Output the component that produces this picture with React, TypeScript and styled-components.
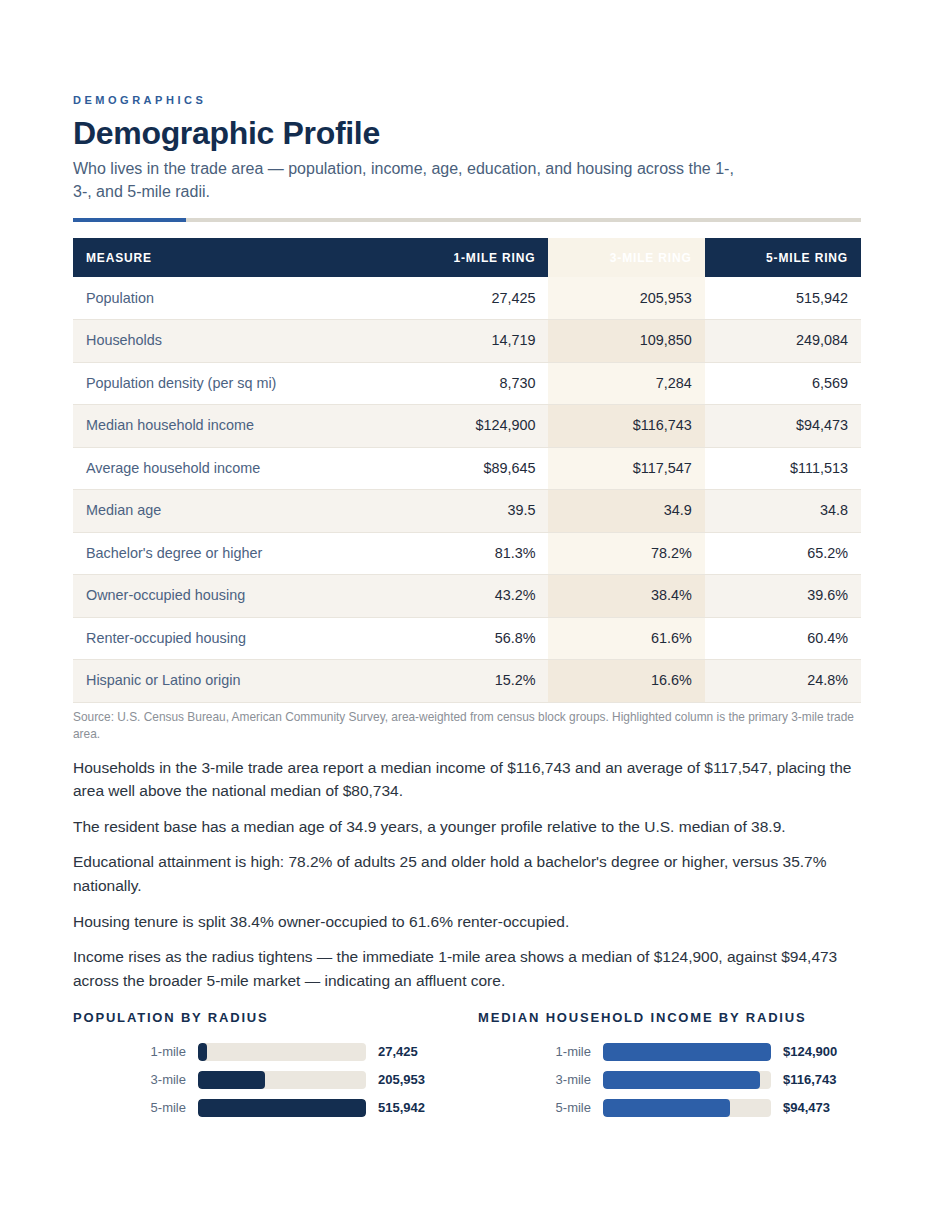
import React from "react";
import styled, { createGlobalStyle } from "styled-components";

const GlobalStyle = createGlobalStyle`
  html, body { margin: 0; padding: 0; background: #ffffff; }
  body { font-family: "Liberation Sans", Arial, sans-serif; -webkit-font-smoothing: antialiased; }
  * { box-sizing: border-box; }
`;

const Page = styled.main`
  width: 935px;
  padding: 94px 74px 80px 73px;
`;

const Eyebrow = styled.div`
  font-size: 11px;
  line-height: 13px;
  font-weight: 700;
  letter-spacing: 0.32em;
  color: #2e5c99;
  text-transform: uppercase;
`;

const Title = styled.h1`
  margin: 7px 0 0;
  font-size: 32px;
  line-height: 38px;
  font-weight: 700;
  letter-spacing: -0.01em;
  color: #132d4f;
`;

const Subtitle = styled.p`
  margin: 5px 0 0;
  max-width: 680px;
  font-size: 16px;
  line-height: 23px;
  color: #4a5f7c;
`;

const Divider = styled.div`
  margin: 15px 0 16px;
  height: 4px;
  background: #dbd8cf;
  display: flex;
`;

const DividerAccent = styled.div`
  width: 113px;
  background: #2d5fa5;
`;

const Table = styled.table`
  width: 100%;
  border-collapse: collapse;
  table-layout: fixed;
`;

const Th = styled.th<{ $num?: boolean; $hl?: boolean }>`
  height: 39px;
  padding: 0 13px;
  font-size: 12px;
  font-weight: 700;
  letter-spacing: 0.07em;
  text-transform: uppercase;
  color: #ffffff;
  background: ${(p) => (p.$hl ? "#f8f3e8" : "#142e50")};
  text-align: ${(p) => (p.$num ? "right" : "left")};
  width: ${(p) => (p.$num ? "19.83%" : "40.5%")};
`;

const Tr = styled.tr<{ $alt: boolean }>`
  background: ${(p) => (p.$alt ? "#f6f3ee" : "#ffffff")};
  border-bottom: 1px solid #e9e5dd;
`;

const Td = styled.td<{ $num?: boolean; $hl?: boolean; $alt?: boolean }>`
  padding: 12px 13px;
  height: 42.5px;
  font-size: 14.4px;
  line-height: 17px;
  color: ${(p) => (p.$num ? "#1f2b3b" : "#4b6282")};
  text-align: ${(p) => (p.$num ? "right" : "left")};
  background: ${(p) => (p.$hl ? (p.$alt ? "#f2eadd" : "#faf6ed") : "transparent")};
`;

const Note = styled.p`
  margin: 6px 0 0;
  font-size: 11.9px;
  line-height: 17px;
  color: #8b9097;
`;

const Body = styled.div`
  margin-top: 13px;
  display: flex;
  flex-direction: column;
  gap: 12.6px;
`;

const Para = styled.p`
  margin: 0;
  font-size: 15.5px;
  line-height: 1.5;
  color: #2b3441;
`;

const Charts = styled.section`
  margin-top: 18px;
  display: grid;
  grid-template-columns: 1fr 1fr;
  column-gap: 22px;
`;

const Chart = styled.div`
  display: flex;
  flex-direction: column;
  gap: 17px;
`;

const ChartTitle = styled.h3`
  margin: 0;
  font-size: 13px;
  line-height: 16px;
  font-weight: 700;
  letter-spacing: 0.14em;
  text-transform: uppercase;
  color: #142e50;
`;

const BarList = styled.div`
  display: flex;
  flex-direction: column;
  gap: 10px;
`;

const BarRow = styled.div`
  display: grid;
  grid-template-columns: 113px 1fr 78px;
  column-gap: 12px;
  align-items: center;
  height: 18px;
`;

const BarLabel = styled.span`
  text-align: right;
  font-size: 13px;
  color: #5a6b80;
`;

const Track = styled.div`
  height: 18px;
  border-radius: 4px;
  background: #ebe7df;
  overflow: hidden;
`;

const Fill = styled.div<{ $color: string }>`
  height: 100%;
  border-radius: 4px;
  background: ${(p) => p.$color};
`;

const BarValue = styled.span`
  font-size: 13px;
  font-weight: 700;
  color: #142e50;
`;

const rows: [string, string, string, string][] = [
  ["Population", "27,425", "205,953", "515,942"],
  ["Households", "14,719", "109,850", "249,084"],
  ["Population density (per sq mi)", "8,730", "7,284", "6,569"],
  ["Median household income", "$124,900", "$116,743", "$94,473"],
  ["Average household income", "$89,645", "$117,547", "$111,513"],
  ["Median age", "39.5", "34.9", "34.8"],
  ["Bachelor's degree or higher", "81.3%", "78.2%", "65.2%"],
  ["Owner-occupied housing", "43.2%", "38.4%", "39.6%"],
  ["Renter-occupied housing", "56.8%", "61.6%", "60.4%"],
  ["Hispanic or Latino origin", "15.2%", "16.6%", "24.8%"],
];

const paragraphs = [
  "Households in the 3-mile trade area report a median income of $116,743 and an average of $117,547, placing the area well above the national median of $80,734.",
  "The resident base has a median age of 34.9 years, a younger profile relative to the U.S. median of 38.9.",
  "Educational attainment is high: 78.2% of adults 25 and older hold a bachelor's degree or higher, versus 35.7% nationally.",
  "Housing tenure is split 38.4% owner-occupied to 61.6% renter-occupied.",
  "Income rises as the radius tightens — the immediate 1-mile area shows a median of $124,900, against $94,473 across the broader 5-mile market — indicating an affluent core.",
];

type Bar = { label: string; value: number; text: string };

const popBars: Bar[] = [
  { label: "1-mile", value: 27425, text: "27,425" },
  { label: "3-mile", value: 205953, text: "205,953" },
  { label: "5-mile", value: 515942, text: "515,942" },
];

const incomeBars: Bar[] = [
  { label: "1-mile", value: 124900, text: "$124,900" },
  { label: "3-mile", value: 116743, text: "$116,743" },
  { label: "5-mile", value: 94473, text: "$94,473" },
];

function BarChart({ title, bars, color }: { title: string; bars: Bar[]; color: string }) {
  const max = Math.max(...bars.map((b) => b.value));
  return (
    <Chart>
      <ChartTitle>{title}</ChartTitle>
      <BarList>
        {bars.map((b) => (
          <BarRow key={b.label}>
            <BarLabel>{b.label}</BarLabel>
            <Track>
              <Fill $color={color} style={{ width: `${Math.max((b.value / max) * 100, 5.3)}%` }} />
            </Track>
            <BarValue>{b.text}</BarValue>
          </BarRow>
        ))}
      </BarList>
    </Chart>
  );
}

export default function App() {
  return (
    <>
      <GlobalStyle />
      <Page>
        <Eyebrow>Demographics</Eyebrow>
        <Title>Demographic Profile</Title>
        <Subtitle>
          Who lives in the trade area — population, income, age, education, and housing across the 1-,
          3-, and 5-mile radii.
        </Subtitle>
        <Divider>
          <DividerAccent />
        </Divider>
        <Table>
          <thead>
            <tr>
              <Th>Measure</Th>
              <Th $num>1-Mile Ring</Th>
              <Th $num $hl>3-Mile Ring</Th>
              <Th $num>5-Mile Ring</Th>
            </tr>
          </thead>
          <tbody>
            {rows.map((r, i) => {
              const alt = i % 2 === 1;
              return (
                <Tr key={r[0]} $alt={alt}>
                  <Td>{r[0]}</Td>
                  <Td $num>{r[1]}</Td>
                  <Td $num $hl $alt={alt}>{r[2]}</Td>
                  <Td $num>{r[3]}</Td>
                </Tr>
              );
            })}
          </tbody>
        </Table>
        <Note>
          Source: U.S. Census Bureau, American Community Survey, area-weighted from census block groups. Highlighted
          column is the primary 3-mile trade area.
        </Note>
        <Body>
          {paragraphs.map((p) => (
            <Para key={p.slice(0, 20)}>{p}</Para>
          ))}
        </Body>
        <Charts>
          <BarChart title="Population by Radius" bars={popBars} color="#142e50" />
          <BarChart title="Median Household Income by Radius" bars={incomeBars} color="#2d5fa8" />
        </Charts>
      </Page>
    </>
  );
}
